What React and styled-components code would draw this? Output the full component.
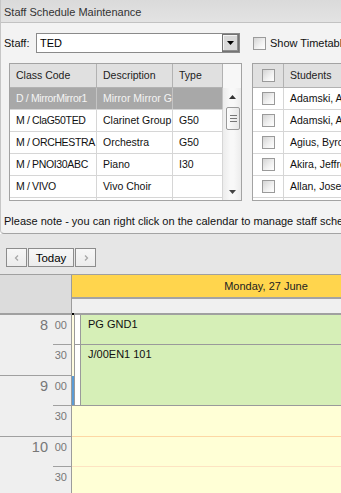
import React from 'react';
import styled, { createGlobalStyle } from 'styled-components';

const GlobalStyle = createGlobalStyle`
  html, body { margin: 0; padding: 0; overflow: hidden; background: #fff; }
  body { font-family: "Liberation Sans", Arial, sans-serif; font-size: 11px; color: #000; }
  *, *::before, *::after { box-sizing: border-box; }
`;

const Page = styled.div`
  width: 460px;
`;

/* ---------- top panel ---------- */
const Panel = styled.section`
  height: 234px;
  background: #f3f3f3;
  border-left: 1px solid #c6c6c6;
  border-bottom: 1px solid #a4a4a4;
  border-bottom-left-radius: 4px;
  display: flex;
  flex-direction: column;
`;

const TitleBar = styled.div`
  height: 23px;
  padding: 6px 0 0 3px;
  line-height: 13px;
  background: linear-gradient(#dadada, #e3e3e3);
  border-bottom: 1px solid #c2c2c2;
  color: #333;
  white-space: nowrap;
`;

const StaffRow = styled.div`
  display: flex;
  align-items: center;
  padding: 10px 0 0 3px;
  white-space: nowrap;
`;

const Label = styled.span`
  width: 32px;
  color: #111;
`;

const Combo = styled.div`
  width: 204px;
  height: 20px;
  border: 1px solid #8a8a8a;
  background: #fff;
  display: flex;
  align-items: center;
  justify-content: space-between;
  padding: 0 0 0 3px;
`;

const ComboButton = styled.div`
  width: 17px;
  height: 18px;
  background: #d9d9d9;
  border: 1px solid #737373;
  box-shadow: inset -1px -1px 0 #8f8f8f, inset 1px 1px 0 #f4f4f4;
  display: flex;
  align-items: center;
  justify-content: center;
`;

const CheckBox = styled.span`
  display: inline-block;
  width: 13px;
  height: 13px;
  flex: none;
  border: 1px solid #9a9a9a;
  background: linear-gradient(135deg, #d4d4d4, #f2f2f2 60%, #ffffff);
`;

const ShowLabel = styled.label`
  display: flex;
  align-items: center;
  gap: 4px;
  margin-left: 13px;
  color: #111;
`;

const GridsRow = styled.div`
  display: flex;
  gap: 10px;
  padding: 10px 0 0 8px;
`;

const Grid = styled.div`
  width: ${p => p.$w}px;
  flex: none;
  height: 138px;
  border: 1px solid #a3a3a3;
  background: #fff;
  overflow: hidden;
  display: flex;
  flex-direction: column;
  font-size: 10.5px;
`;

const HeadRow = styled.div`
  display: flex;
  height: 24px;
  flex: none;
`;

const HeadCell = styled.div`
  width: ${p => p.$w}px;
  flex: none;
  height: 24px;
  line-height: 23px;
  padding: 0 6px;
  background: #e0e0e0;
  border-right: 1px solid #b2b2b2;
  border-bottom: 1px solid #b2b2b2;
  color: #222;
  white-space: nowrap;
  overflow: hidden;
  display: flex;
  align-items: center;
  justify-content: ${p => (p.$center ? 'center' : 'flex-start')};
`;

const HeadFiller = styled.div`
  width: 18px;
  flex: none;
  background: #f7f7f7;
`;

const GridBody = styled.div`
  display: flex;
  flex: 1;
  min-height: 0;
`;

const Rows = styled.div`
  flex: 1;
  display: flex;
  flex-direction: column;
  overflow: hidden;
`;

const Row = styled.div`
  display: flex;
  height: 22px;
  flex: none;
  border-bottom: 1px solid #d6d6d6;
  background: ${p => (p.$sel ? '#a8a8a8' : '#fff')};
  color: ${p => (p.$sel ? '#f4f4f4' : '#111')};
`;

const Cell = styled.div`
  width: ${p => p.$w}px;
  flex: none;
  line-height: 21px;
  padding: 0 6px;
  border-right: 1px solid ${p => (p.$sel ? '#c4c4c4' : '#d6d6d6')};
  white-space: nowrap;
  overflow: hidden;
  letter-spacing: ${p => (p.$tight ? '-0.35px' : '0')};
  display: flex;
  align-items: center;
  justify-content: ${p => (p.$center ? 'center' : 'flex-start')};
`;

const ScrollBar = styled.div`
  width: 18px;
  flex: none;
  display: flex;
  flex-direction: column;
  align-items: center;
  background: linear-gradient(90deg, #ececec, #f8f8f8 40%, #f8f8f8 60%, #ececec);
`;

const ScrollArrow = styled.div`
  height: 17px;
  flex: none;
  display: flex;
  align-items: center;
  justify-content: center;
`;

const Track = styled.div`
  flex: 1;
  width: 100%;
  padding: 2px 1px 0 3px;
`;

const Thumb = styled.div`
  height: 23px;
  border: 1px solid #9a9a9a;
  border-radius: 2px;
  background: linear-gradient(90deg, #fdfdfd, #e6e6e6);
  display: flex;
  flex-direction: column;
  align-items: center;
  justify-content: center;
  gap: 2px;
`;

const Grip = styled.span`
  width: 7px;
  height: 1px;
  background: #777;
`;

const Note = styled.div`
  padding: 14px 0 0 3px;
  line-height: 13px;
  white-space: nowrap;
  color: #111;
`;

/* ---------- toolbar ---------- */
const Toolbar = styled.div`
  height: 40px;
  background: #e6e6e6;
  display: flex;
  gap: 1px;
  padding: 14px 0 0 6px;
`;

const NavButton = styled.button`
  width: ${p => p.$w}px;
  height: 19px;
  padding: 0;
  border: 1px solid #8c8c8c;
  background: linear-gradient(#f7f7f7, #ececec);
  font: inherit;
  font-size: 11.5px;
  color: #000;
  display: flex;
  align-items: center;
  justify-content: center;
`;

/* ---------- calendar ---------- */
const Calendar = styled.div`
  border-top: 1px solid #a0a0a0;
  display: grid;
  grid-template-columns: 72px 1fr;
`;

const GutterHead = styled.div`
  height: 40px;
  background: #dcdcdc;
  border-right: 1px solid #9c9c9c;
  border-bottom: 2px solid #a0a0a0;
`;

const DayHead = styled.div`
  display: flex;
  flex-direction: column;
`;

const DateBar = styled.div`
  height: 24px;
  line-height: 22px;
  text-align: center;
  background: #ffd54d;
  border-bottom: 2px solid #a3a3a3;
  color: #222;
`;

const AllDay = styled.div`
  height: 16px;
  background: #f0f0f0;
  border-bottom: 2px solid #a0a0a0;
`;

const Gutter = styled.div`
  background: #efefef;
  border-right: 1px solid #9c9c9c;
`;

const HourBlock = styled.div`
  display: grid;
  grid-template-columns: 53px 18px;
  height: 61px;
  border-bottom: 1px solid #a0a0a0;
  color: #777;
`;

const HourNum = styled.div`
  text-align: right;
  padding: 3px 5px 0 0;
  font-size: 14.5px;
  line-height: 14px;
`;

const MinCol = styled.div`
  display: flex;
  flex-direction: column;
`;

const MinCell = styled.div`
  height: 30px;
  border-bottom: ${p => (p.$top ? '1px solid #a0a0a0' : 'none')};
  text-align: right;
  padding: 5px 4px 0 0;
  line-height: 11px;
  font-size: 11px;
`;

const DayBody = styled.div`
  position: relative;
`;

const Slot = styled.div`
  height: ${p => (p.$half ? 31 : 30)}px;
  background: #ffffd6;
  border-bottom: 1px solid ${p => (p.$half ? '#fdd7a4' : '#fde3c2')};
`;

const Event = styled.div`
  position: absolute;
  top: 0;
  left: 0;
  right: 0;
  height: 91px;
  display: grid;
  grid-template-columns: 2px 1fr;
  border-bottom: 1px solid #9a9a9a;

  &::before {
    content: '';
    position: absolute;
    left: 0;
    top: -2px;
    width: 2px;
    height: 2px;
    background: #000;
  }
`;

const Strip = styled.div`
  display: flex;
  flex-direction: column;
`;

const StripPart = styled.div`
  flex: ${p => (p.$busy ? 1 : 'none')};
  height: ${p => (p.$busy ? 'auto' : '61px')};
  background: ${p => (p.$busy ? '#5b9bd5' : '#fffce0')};
`;

const EventRows = styled.div`
  display: flex;
  flex-direction: column;
  border-left: 1px solid #9a9a9a;
`;

const EventRow = styled.div`
  height: ${p => p.$h}px;
  display: flex;
  border-bottom: ${p => (p.$line ? '1px solid #9a9a9a' : 'none')};
`;

const EventGap = styled.div`
  width: 6px;
  flex: none;
  background: #fff;
  border-right: 1px solid #9a9a9a;
`;

const EventBody = styled.div`
  flex: 1;
  background: #d6efb7;
  padding: 3px 0 0 7px;
  line-height: 13px;
  color: #111;
  white-space: nowrap;
`;

const Chevron = ({ dir }) => (
  <svg width="6" height="8" viewBox="0 0 6 8">
    <polyline
      points={dir === 'left' ? '4,1.5 1.5,4 4,6.5' : '2,1.5 4.5,4 2,6.5'}
      fill="none"
      stroke="#a8a8a8"
      strokeWidth="1.3"
    />
  </svg>
);

const Tri = ({ up, w = 7, h = 4, color = '#000' }) => (
  <svg width={w} height={h} viewBox={`0 0 ${w} ${h}`}>
    <polygon points={up ? `0,${h} ${w},${h} ${w / 2},0` : `0,0 ${w},0 ${w / 2},${h}`} fill={color} />
  </svg>
);

const classes = [
  { code: 'D / MirrorMirror1', desc: 'Mirror Mirror Group', type: '', sel: true },
  { code: 'M / ClaG50TED', desc: 'Clarinet Group', type: 'G50' },
  { code: 'M / ORCHESTRA', desc: 'Orchestra', type: 'G50' },
  { code: 'M / PNOI30ABC', desc: 'Piano', type: 'I30' },
  { code: 'M / VIVO', desc: 'Vivo Choir', type: '' },
  { code: '', desc: '', type: '' },
];

const students = ['Adamski, Aaron', 'Adamski, Alicia', 'Agius, Byron', 'Akira, Jeffrey', 'Allan, Joseph', ''];

const hours = ['8', '9', '10'];

export default function App() {
  return (
    <Page>
      <GlobalStyle />
      <Panel>
        <TitleBar>Staff Schedule Maintenance</TitleBar>
        <StaffRow>
          <Label>Staff:</Label>
          <Combo>
            <span>TED</span>
            <ComboButton>
              <Tri />
            </ComboButton>
          </Combo>
          <ShowLabel>
            <CheckBox />
            Show Timetable
          </ShowLabel>
        </StaffRow>
        <GridsRow>
          <Grid $w={233}>
            <HeadRow>
              <HeadCell $w={87}>Class Code</HeadCell>
              <HeadCell $w={76}>Description</HeadCell>
              <HeadCell $w={50}>Type</HeadCell>
              <HeadFiller />
            </HeadRow>
            <GridBody>
              <Rows>
                {classes.map((c, i) => (
                  <Row key={i} $sel={c.sel}>
                    <Cell $w={87} $sel={c.sel} $tight>{c.code}</Cell>
                    <Cell $w={76} $sel={c.sel}>{c.desc}</Cell>
                    <Cell $w={50} $sel={c.sel}>{c.type}</Cell>
                  </Row>
                ))}
              </Rows>
              <ScrollBar>
                <ScrollArrow>
                  <Tri up w={7} h={4} color="#333" />
                </ScrollArrow>
                <Track>
                  <Thumb>
                    <Grip />
                    <Grip />
                    <Grip />
                  </Thumb>
                </Track>
                <ScrollArrow>
                  <Tri w={7} h={4} color="#444" />
                </ScrollArrow>
              </ScrollBar>
            </GridBody>
          </Grid>
          <Grid $w={220}>
            <HeadRow>
              <HeadCell $w={31} $center>
                <CheckBox />
              </HeadCell>
              <HeadCell $w={189}>Students</HeadCell>
            </HeadRow>
            <Rows>
              {students.map((s, i) => (
                <Row key={i}>
                  <Cell $w={31} $center>{s && <CheckBox />}</Cell>
                  <Cell $w={189}>{s}</Cell>
                </Row>
              ))}
            </Rows>
          </Grid>
        </GridsRow>
        <Note>Please note - you can right click on the calendar to manage staff schedules.</Note>
      </Panel>

      <Toolbar>
        <NavButton $w={21} aria-label="Previous">
          <Chevron dir="left" />
        </NavButton>
        <NavButton $w={46}>Today</NavButton>
        <NavButton $w={21} aria-label="Next">
          <Chevron dir="right" />
        </NavButton>
      </Toolbar>

      <Calendar>
        <GutterHead />
        <DayHead>
          <DateBar>Monday, 27 June</DateBar>
          <AllDay />
        </DayHead>
        <Gutter>
          {hours.map(h => (
            <HourBlock key={h}>
              <HourNum>{h}</HourNum>
              <MinCol>
                <MinCell $top>00</MinCell>
                <MinCell>30</MinCell>
              </MinCol>
            </HourBlock>
          ))}
        </Gutter>
        <DayBody>
          {hours.map(h => (
            <React.Fragment key={h}>
              <Slot />
              <Slot $half />
            </React.Fragment>
          ))}
          <Event>
            <Strip>
              <StripPart />
              <StripPart $busy />
            </Strip>
            <EventRows>
              <EventRow $h={30} $line>
                <EventGap />
                <EventBody>PG GND1</EventBody>
              </EventRow>
              <EventRow $h={60}>
                <EventGap />
                <EventBody>J/00EN1 101</EventBody>
              </EventRow>
            </EventRows>
          </Event>
        </DayBody>
      </Calendar>
    </Page>
  );
}
